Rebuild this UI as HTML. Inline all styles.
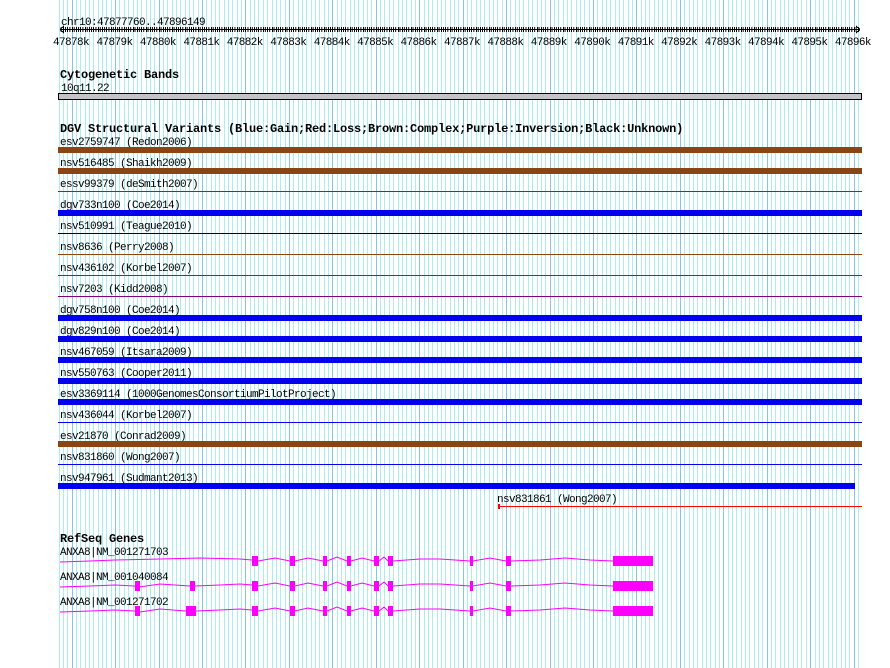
<!DOCTYPE html>
<html><head><meta charset="utf-8"><style>
html,body{margin:0;padding:0;background:#fff;width:890px;height:668px;overflow:hidden}
svg{display:block}
text{font-family:"Liberation Mono","DejaVu Sans Mono",monospace;font-size:11px;letter-spacing:-0.6px;fill:#000}
.h{font-weight:bold;font-size:12px;letter-spacing:-0.2px}
</style></head><body>
<svg id="s" width="890" height="668" xmlns="http://www.w3.org/2000/svg" shape-rendering="crispEdges">
<defs>
<pattern id="g" x="72" y="0" width="43.44" height="10" patternUnits="userSpaceOnUse">
<rect x="0" y="0" width="1" height="10" fill="#88c4ea"/>
<rect x="4.344" width="1" height="10" fill="#aaeef0"/>
<rect x="8.688" width="1" height="10" fill="#aaeef0"/>
<rect x="13.032" width="1" height="10" fill="#aaeef0"/>
<rect x="17.376" width="1" height="10" fill="#aaeef0"/>
<rect x="21.72" width="1" height="10" fill="#aaeef0"/>
<rect x="26.064" width="1" height="10" fill="#aaeef0"/>
<rect x="30.408" width="1" height="10" fill="#aaeef0"/>
<rect x="34.752" width="1" height="10" fill="#aaeef0"/>
<rect x="39.096" width="1" height="10" fill="#aaeef0"/>
</pattern>
<pattern id="t" x="60.7" y="0" width="4.344" height="10" patternUnits="userSpaceOnUse">
<rect x="0" y="0" width="1" height="10" fill="#000"/>
</pattern>
</defs>
<rect id="gp" x="58" y="0" width="801" height="668" fill="url(#g)"/>
<g id="grid"></g>
<!-- ruler -->
<text x="61" y="25">chr10:47877760..47896149</text>
<rect x="60" y="29" width="800" height="1" fill="#000"/>
<rect x="60" y="27" width="800" height="5" fill="url(#t)"/>
<path d="M60 29.5 L64 26 M60 29.5 L64 33 M860 29.5 L856 26 M860 29.5 L856 33" stroke="#000" stroke-width="1" fill="none"/>
<g text-anchor="middle">
<text x="71" y="45">47878k</text><text x="114.5" y="45">47879k</text><text x="157.9" y="45">47880k</text><text x="201.4" y="45">47881k</text><text x="244.8" y="45">47882k</text><text x="288.2" y="45">47883k</text><text x="331.7" y="45">47884k</text><text x="375.1" y="45">47885k</text><text x="418.5" y="45">47886k</text><text x="462" y="45">47887k</text><text x="505.4" y="45">47888k</text><text x="548.8" y="45">47889k</text><text x="592.3" y="45">47890k</text><text x="635.7" y="45">47891k</text><text x="679.1" y="45">47892k</text><text x="722.6" y="45">47893k</text><text x="766" y="45">47894k</text><text x="809.4" y="45">47895k</text><text x="852.9" y="45">47896k</text>
</g>
<!-- cyto -->
<text class="h" x="60" y="78">Cytogenetic Bands</text>
<text x="61" y="91">10q11.22</text>
<rect x="58.5" y="93.5" width="803" height="6" fill="#c4c4c8" stroke="#000"/>
<!-- DGV -->
<text class="h" x="60" y="132">DGV Structural Variants (Blue:Gain;Red:Loss;Brown:Complex;Purple:Inversion;Black:Unknown)</text>
<g>
<text x="60" y="145">esv2759747 (Redon2006)</text><rect x="58" y="147" width="804" height="6" fill="#8b4513"/>
<text x="60" y="166">nsv516485 (Shaikh2009)</text><rect x="58" y="168" width="804" height="6" fill="#8b4513"/>
<text x="60" y="187">essv99379 (deSmith2007)</text><rect x="58" y="191" width="804" height="1" fill="#e00000"/>
<text x="60" y="208">dgv733n100 (Coe2014)</text><rect x="58" y="210" width="804" height="6" fill="#0000ee"/>
<text x="60" y="229">nsv510991 (Teague2010)</text><rect x="58" y="233" width="804" height="1" fill="#000"/>
<text x="60" y="250">nsv8636 (Perry2008)</text><rect x="58" y="254" width="804" height="1" fill="#8b4513"/>
<text x="60" y="271">nsv436102 (Korbel2007)</text><rect x="58" y="275" width="804" height="1" fill="#e00000"/>
<text x="60" y="292">nsv7203 (Kidd2008)</text><rect x="58" y="296" width="804" height="1" fill="#800080"/>
<text x="60" y="313">dgv758n100 (Coe2014)</text><rect x="58" y="315" width="804" height="6" fill="#0000ee"/>
<text x="60" y="334">dgv829n100 (Coe2014)</text><rect x="58" y="336" width="804" height="6" fill="#0000ee"/>
<text x="60" y="355">nsv467059 (Itsara2009)</text><rect x="58" y="357" width="804" height="6" fill="#0000ee"/>
<text x="60" y="376">nsv550763 (Cooper2011)</text><rect x="58" y="378" width="804" height="6" fill="#0000ee"/>
<text x="60" y="397">esv3369114 (1000GenomesConsortiumPilotProject)</text><rect x="58" y="399" width="804" height="6" fill="#0000ee"/>
<text x="60" y="418">nsv436044 (Korbel2007)</text><rect x="58" y="422" width="804" height="1" fill="#0000ee"/>
<text x="60" y="439">esv21870 (Conrad2009)</text><rect x="58" y="441" width="804" height="6" fill="#8b4513"/>
<text x="60" y="460">nsv831860 (Wong2007)</text><rect x="58" y="464" width="804" height="1" fill="#0000ee"/>
<text x="60" y="481">nsv947961 (Sudmant2013)</text><rect x="58" y="483" width="797" height="6" fill="#0000ee"/>
<text x="497" y="502">nsv831861 (Wong2007)</text><rect x="498" y="506" width="364" height="1" fill="#ff0000"/><rect x="498" y="504" width="2" height="5" fill="#ff0000"/>
</g>
<!-- RefSeq -->
<text class="h" x="60" y="542">RefSeq Genes</text>
<text x="60" y="555">ANXA8|NM_001271703</text>
<text x="60" y="580">ANXA8|NM_001040084</text>
<text x="60" y="605">ANXA8|NM_001271702</text>
<g fill="none" stroke="#ff00ff" stroke-width="1" shape-rendering="auto">
<polyline points="60,562 90,561 115,560 160,559 200,558 240,559 252,560"/>
<polyline points="258,561 275,558 290,561 295,561 308,558 323,561 327,561 337,557 347,561 351,561 362,558 374,561 379,561 384,557 388,561 393,561 420,559 440,559 470,561 473,561 490,558 506,561 511,561 540,560 565,558 590,560 613,561"/>
<polyline points="60,587 90,586 115,585 134,586 139,587 160,584 190,586 195,586 220,585 240,584 252,585"/>
<polyline points="258,586 275,583 290,586 295,586 308,583 323,586 327,586 337,582 347,586 351,586 362,583 374,586 379,586 384,582 388,586 393,586 420,584 440,584 470,586 473,586 490,583 506,586 511,586 540,585 565,583 590,585 613,586"/>
<polyline points="60,612 90,611 115,610 135,611 140,612 160,609 186,611 196,611 220,610 240,609 252,610"/>
<polyline points="258,611 275,608 290,611 295,611 308,608 323,611 327,611 337,607 347,611 351,611 362,608 374,611 379,611 384,607 388,611 393,611 420,609 440,609 470,611 473,611 490,608 506,611 511,611 540,610 565,608 590,610 613,611"/>
</g>
<g fill="#ff00ff">
<rect x="252" y="556" width="6" height="10"/><rect x="290" y="556" width="5" height="10"/><rect x="323" y="556" width="4" height="10"/><rect x="347" y="556" width="4" height="10"/><rect x="374" y="556" width="5" height="10"/><rect x="388" y="556" width="5" height="10"/><rect x="470" y="556" width="3" height="10"/><rect x="506" y="556" width="5" height="10"/><rect x="613" y="556" width="40" height="10"/>
<rect x="135" y="581" width="5" height="10"/><rect x="190" y="581" width="5" height="10"/>
<rect x="252" y="581" width="6" height="10"/><rect x="290" y="581" width="5" height="10"/><rect x="323" y="581" width="4" height="10"/><rect x="347" y="581" width="4" height="10"/><rect x="374" y="581" width="5" height="10"/><rect x="388" y="581" width="5" height="10"/><rect x="470" y="581" width="3" height="10"/><rect x="506" y="581" width="5" height="10"/><rect x="613" y="581" width="40" height="10"/>
<rect x="135" y="606" width="5" height="10"/><rect x="186" y="606" width="10" height="10"/>
<rect x="252" y="606" width="6" height="10"/><rect x="290" y="606" width="5" height="10"/><rect x="323" y="606" width="4" height="10"/><rect x="347" y="606" width="4" height="10"/><rect x="374" y="606" width="5" height="10"/><rect x="388" y="606" width="5" height="10"/><rect x="470" y="606" width="3" height="10"/><rect x="506" y="606" width="5" height="10"/><rect x="613" y="606" width="40" height="10"/>
</g>
</svg>
<script>
(function(){
var ns="http://www.w3.org/2000/svg",g=document.getElementById("grid");
document.getElementById("gp").setAttribute("fill","none");
for(var k=-3;k<=181;k++){
 var x=Math.round(71.7+4.344*k);
 var r=document.createElementNS(ns,"rect");
 r.setAttribute("x",x);r.setAttribute("y",0);r.setAttribute("width",1);r.setAttribute("height",668);
 r.setAttribute("fill",(k%10===0)?"#88c4ea":"#aaeef0");
 g.appendChild(r);
 ticks(x);
}
function ticks(x){
 if(x<60||x>860)return;
 var t=document.createElementNS(ns,"rect");
 t.setAttribute("x",x);t.setAttribute("y",27);t.setAttribute("width",1);t.setAttribute("height",5);t.setAttribute("fill","#000");
 document.getElementById("s").appendChild(t);
}
})();
</script>
</body></html>
